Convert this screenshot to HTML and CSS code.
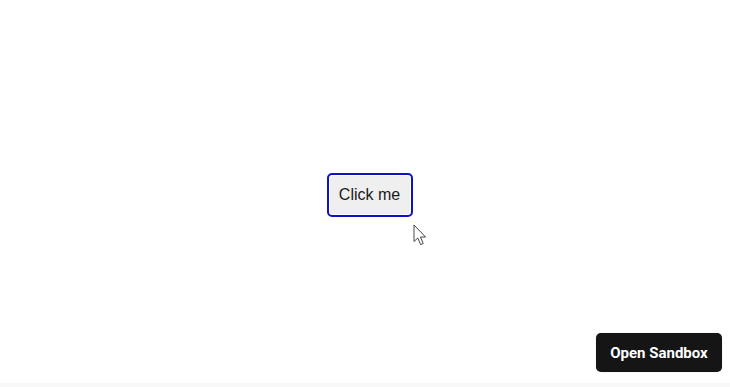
FILE: index.html
```html
<!DOCTYPE html>
<html>
<head>
<meta charset="utf-8">
<link rel="stylesheet" href="styles.css">
</head>
<body>
<main class="stage">
  <button class="click-btn" type="button">Click me</button>
</main>
<svg class="cursor" width="16" height="24" viewBox="0 0 16 24" aria-hidden="true">
  <path d="M1 1 L1 17.5 L4.8 14 L7.6 20.6 L10.2 19.5 L7.5 13 L12.6 13 Z" fill="#fff" stroke="#333" stroke-width="0.9" stroke-linejoin="round"/>
</svg>
<div class="bottom-strip"></div>
<a class="sandbox-btn" href="#">Open Sandbox</a>
</body>
</html>
```
FILE: styles.css
```css
html, body {
  margin: 0;
  padding: 0;
  background: #ffffff;
  overflow: hidden;
}
body {
  width: 730px;
  height: 387px;
  position: relative;
}
.stage {
  height: 383px;
  display: flex;
  align-items: center;
  justify-content: center;
  padding-left: 9px;
  padding-top: 6px;
  box-sizing: border-box;
}
.click-btn {
  font-family: "Liberation Sans", Arial, sans-serif;
  font-size: 16px;
  line-height: 18px;
  color: #1a1a1a;
  background: #efefef;
  border: 2px solid #1010c8;
  border-radius: 5px;
  padding: 0;
  white-space: nowrap;
  width: 86px;
  height: 44px;
  box-sizing: border-box;
  box-shadow: inset 0 0 0 1px #ffffff;
}
.bottom-strip {
  height: 4px;
  background: #f8f8f8;
}
.cursor {
  position: absolute;
  left: 413px;
  top: 224px;
}
.sandbox-btn {
  position: absolute;
  right: 8px;
  bottom: 15px;
  width: 126px;
  height: 39px;
  box-sizing: border-box;
  display: flex;
  align-items: center;
  justify-content: center;
  background: #151515;
  color: #ffffff;
  border-radius: 5px;
  font-family: Roboto, "Liberation Sans", sans-serif;
  font-weight: 700;
  font-size: 15px;
  text-decoration: none;
  box-shadow: 0 0 1px rgba(0,0,0,0.3);
}
```
